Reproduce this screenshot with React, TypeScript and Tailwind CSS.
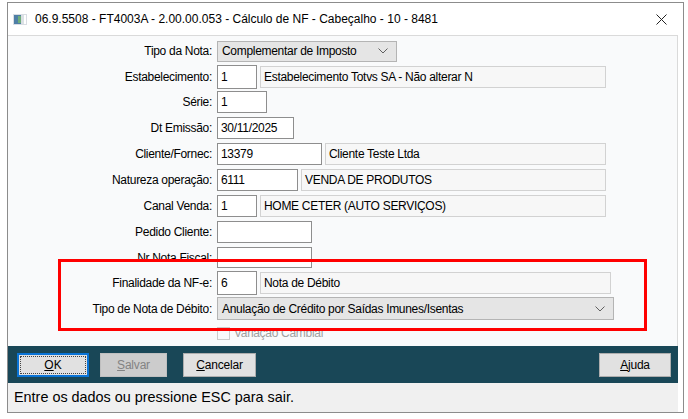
import React from "react";

const font = "font-['Liberation_Sans',Arial,sans-serif]";

const Chevron: React.FC = () => (
  <svg width="10" height="6" viewBox="0 0 10 6" className="shrink-0">
    <path d="M0.5 0.5 L5 5 L9.5 0.5" fill="none" stroke="#606060" strokeWidth="1" />
  </svg>
);

const Row: React.FC<{ label: string; h: string; children?: React.ReactNode }> = ({ label, h, children }) => (
  <div className={`flex items-center ${h}`}>
    <div className="w-[205px] shrink-0 pr-[1px] text-right text-[12px] tracking-[-0.3px] text-black whitespace-nowrap">{label}</div>
    <div className="ml-[4px] flex items-center gap-[3px]">{children}</div>
  </div>
);

const Input: React.FC<{ w: string; value?: string; h?: string }> = ({ w, value, h = "h-[22px]" }) => (
  <div className={`${w} ${h} flex items-center border border-[#8e8e8e] bg-white pl-[3px] text-[12px] tracking-[-0.3px] text-black`}>
    {value}
  </div>
);

const Desc: React.FC<{ w: string; value: string }> = ({ w, value }) => (
  <div className={`${w} h-[22px] flex items-center border border-[#d2d2d2] bg-[#f7f7f7] pl-[3px] text-[12px] tracking-[-0.3px] text-black whitespace-nowrap overflow-hidden`}>
    {value}
  </div>
);

const Select: React.FC<{ w: string; h: string; value: string }> = ({ w, h, value }) => (
  <div className={`${w} ${h} flex items-center justify-between border border-[#b4b4b4] bg-[#e5e5e5] pl-[4px] pr-[8px] text-[12px] tracking-[-0.3px] text-black whitespace-nowrap`}>
    <span>{value}</span>
    <Chevron />
  </div>
);

const Btn: React.FC<{ w: string; first: string; rest: string; variant?: "focus" | "disabled" }> = ({ w, first, rest, variant }) => {
  if (variant === "focus") {
    return (
      <div className={`${w} h-[24px] border-2 border-[#0a74d6] bg-[#e1e1e1] p-[1px]`}>
        <div className="flex h-full w-full items-center justify-center border border-dotted border-[#444] text-[12px] text-black">
          <span className="underline">{first}</span>
          {rest}
        </div>
      </div>
    );
  }
  const disabled = variant === "disabled";
  return (
    <div
      className={`${w} h-[24px] flex items-center justify-center border text-[12px] tracking-[-0.2px] ${
        disabled ? "border-[#bfbfbf] bg-[#cccccc] text-[#838383]" : "border-[#adadad] bg-[#e1e1e1] text-black"
      }`}
    >
      <span className="underline">{first}</span>
      {rest}
    </div>
  );
};

export default function App() {
  return (
    <div className={`relative h-[419px] w-[688px] overflow-hidden bg-white ${font}`}>
      <div className="ml-[7px] mt-[2px] flex h-[411px] w-[677px] flex-col border border-[#8c8c8c] bg-white">
        {/* title bar */}
        <div className="flex h-[32px] shrink-0 items-center">
          <svg width="14" height="11" viewBox="0 0 14 11" className="ml-[5px]">
            <rect x="0" y="0" width="14" height="11" fill="#d9dde3" />
            <rect x="1" y="1" width="7" height="9" fill="#4f7fa6" />
            <rect x="5" y="2" width="3" height="7" fill="#6fae7a" />
            <rect x="9" y="1" width="4" height="9" fill="#ffffff" />
            <rect x="9.5" y="1" width="1" height="9" fill="#b8c4cc" />
          </svg>
          <span className="ml-[8px] text-[12px] text-black whitespace-nowrap">
            06.9.5508 - FT4003A - 2.00.00.053 - Cálculo de NF - Cabeçalho - 10 - 8481
          </span>
          <svg width="11" height="11" viewBox="0 0 11 11" className="ml-auto mr-[16px]">
            <path d="M0.5 0.5 L10.5 10.5 M10.5 0.5 L0.5 10.5" stroke="#222" strokeWidth="1" />
          </svg>
        </div>

        <div className="flex flex-1 flex-col pr-[5px]">
          {/* form */}
          <div className="flex h-[311px] flex-col border-t border-r border-[#dadada] bg-[#f9fafb] pt-[2px]">
            <Row label="Tipo da Nota:" h="h-[26px]">
              <Select w="w-[180px]" h="h-[21px]" value="Complementar de Imposto" />
            </Row>
            <Row label="Estabelecimento:" h="h-[25px]">
              <Input w="w-[40px]" h="h-[24px]" value="1" />
              <Desc w="w-[346px]" value="Estabelecimento Totvs SA - Não alterar N" />
            </Row>
            <Row label="Série:" h="h-[26px]">
              <Input w="w-[50px]" value="1" />
            </Row>
            <Row label="Dt Emissão:" h="h-[26px]">
              <Input w="w-[77px]" value="30/11/2025" />
            </Row>
            <Row label="Cliente/Fornec:" h="h-[26px]">
              <Input w="w-[105px]" value="13379" />
              <Desc w="w-[281px]" value="Cliente Teste Ltda" />
            </Row>
            <Row label="Natureza operação:" h="h-[26px]">
              <Input w="w-[81px]" value="6111" />
              <Desc w="w-[305px]" value="VENDA DE PRODUTOS" />
            </Row>
            <Row label="Canal Venda:" h="h-[26px]">
              <Input w="w-[40px]" value="1" />
              <Desc w="w-[346px]" value="HOME CETER (AUTO SERVIÇOS)" />
            </Row>
            <Row label="Pedido Cliente:" h="h-[26px]">
              <Input w="w-[95px]" />
            </Row>
            <Row label="Nr Nota Fiscal:" h="h-[25px]">
              <Input w="w-[95px]" h="h-[21px]" />
            </Row>
            <Row label="Finalidade da NF-e:" h="h-[26px]">
              <Input w="w-[40px]" h="h-[24px]" value="6" />
              <Desc w="w-[351px]" value="Nota de Débito" />
            </Row>
            <Row label="Tipo de Nota de Débito:" h="h-[25px]">
              <Select w="w-[397px]" h="h-[23px]" value="Anulação de Crédito por Saídas Imunes/Isentas" />
            </Row>
            <Row label="" h="h-[24px]">
              <div className="flex items-center gap-[4px]">
                <div className="h-[13px] w-[13px] border border-[#cccccc] bg-[#f9fafb]" />
                <span className="text-[12px] tracking-[-0.3px] text-[#a0a0a0]">Variação Cambial</span>
              </div>
            </Row>
          </div>

          {/* button bar */}
          <div className="flex h-[37px] shrink-0 items-start bg-[#194757] pl-[9px] pr-[7px] pt-[7px]">
            <Btn w="w-[72px]" first="O" rest="K" variant="focus" />
            <div className="ml-[11px]">
              <Btn w="w-[67px]" first="S" rest="alvar" variant="disabled" />
            </div>
            <div className="ml-[16px]">
              <Btn w="w-[73px]" first="C" rest="ancelar" />
            </div>
            <div className="ml-auto">
              <Btn w="w-[72px]" first="A" rest="juda" />
            </div>
          </div>

          {/* status bar */}
          <div className="flex flex-1 items-center bg-[#f0f0f0] pl-[6px] text-[14.4px] text-black">
            Entre os dados ou pressione ESC para sair.
          </div>
        </div>
      </div>

      {/* annotation box */}
      <div className="pointer-events-none absolute left-[58px] top-[259px] h-[72px] w-[589px] border-[3px] border-[#ff0000]" />
    </div>
  );
}
